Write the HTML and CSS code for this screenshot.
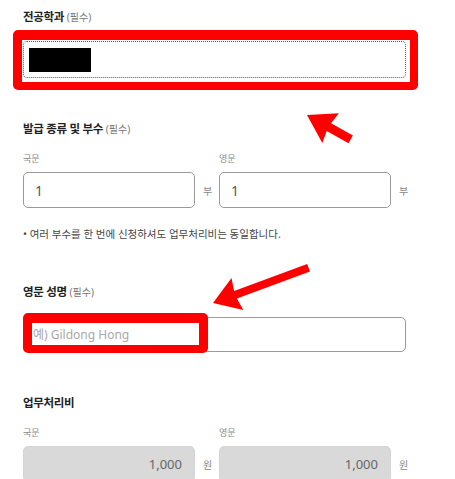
FILE: index.html
```html
<!DOCTYPE html>
<html lang="ko">
<head>
    <meta charset="UTF-8">
    <meta name="viewport" content="width=device-width, initial-scale=1.0">
    <title>증명서 발급 신청</title>
    <link rel="stylesheet" href="styles.css">
</head>
<body>
    <div class="form">
        <div class="section first">
            <div class="label">전공학과 <span class="req">(필수)</span></div>
            <div class="field field-major">
                <input class="text-input focused" type="text" value="">
                <div class="redact"></div>
                <div class="highlight hl-major"></div>
            </div>
        </div>

        <div class="section">
            <div class="label">발급 종류 및 부수 <span class="req">(필수)</span></div>
            <div class="pair">
                <div class="col">
                    <div class="sub-label">국문</div>
                    <div class="unit-row">
                        <input class="half-input" type="text" value="1">
                        <span class="unit">부</span>
                    </div>
                </div>
                <div class="col">
                    <div class="sub-label">영문</div>
                    <div class="unit-row">
                        <input class="half-input" type="text" value="1">
                        <span class="unit">부</span>
                    </div>
                </div>
            </div>
            <p class="note">• 여러 부수를 한 번에 신청하셔도 업무처리비는 동일합니다.</p>
        </div>

        <div class="section">
            <div class="label">영문 성명 <span class="req">(필수)</span></div>
            <div class="field field-name">
                <input class="text-input" type="text" placeholder="예) Gildong Hong">
                <div class="highlight hl-name"></div>
            </div>
        </div>

        <div class="section">
            <div class="label">업무처리비</div>
            <div class="pair">
                <div class="col">
                    <div class="sub-label">국문</div>
                    <div class="unit-row">
                        <input class="half-input readonly" type="text" value="1,000" readonly>
                        <span class="unit">원</span>
                    </div>
                </div>
                <div class="col">
                    <div class="sub-label">영문</div>
                    <div class="unit-row">
                        <input class="half-input readonly" type="text" value="1,000" readonly>
                        <span class="unit">원</span>
                    </div>
                </div>
            </div>
        </div>
    </div>

    <!-- annotation arrows -->
    <svg class="arrows" width="455" height="479" viewBox="0 0 455 479">
        <polygon fill="#ff0000" points="307,115 338.9,113.3 331,123.3 352.9,135.5 348.5,143.3 326.7,131.1 322.3,143.1"/>
        <polygon fill="#ff0000" points="213,303 231.5,278.1 234.1,290.9 307.2,263.9 310,271.4 236.9,298.4 243.3,309.9"/>
    </svg>
</body>
</html>
```

FILE: styles.css
```css
body {
    margin: 0;
    font-family: "Noto Sans", "Noto Sans CJK KR", sans-serif;
    background: #fff;
    color: #222;
    position: relative;
    width: 455px;
    height: 479px;
    overflow: hidden;
}
.form {
    padding: 0 23px;
}
.section {
    margin-top: 43px;
}
.section.first {
    margin-top: 9px;
}
.label {
    font-size: 11.5px;
    line-height: 16px;
    font-weight: 700;
    letter-spacing: -0.3px;
    color: #222;
}
.label .req {
    font-weight: 400;
    font-size: 10px;
    color: #777;
    letter-spacing: 0;
}
.field {
    position: relative;
    width: 383px;
    margin-top: 16px;
}
.field-name {
    margin-top: 17px;
}
.text-input {
    display: block;
    box-sizing: border-box;
    width: 383px;
    height: 35px;
    border: 1px solid #9a9a9a;
    border-radius: 5px;
    padding: 0 9px;
    font-family: inherit;
    font-size: 12px;
    color: #333;
    outline: none;
}
.text-input::placeholder {
    color: #a8a8a8;
}
.text-input.focused {
    height: 37px;
    border: 1px dotted #3f5f92;
    border-radius: 4px;
}
.redact {
    position: absolute;
    left: 6px;
    top: 7px;
    width: 62px;
    height: 24px;
    background: #000;
}
.highlight {
    position: absolute;
    border: 9px solid #ff0000;
    border-radius: 5px;
}
.hl-major {
    left: -10px;
    top: -11px;
    right: -12px;
    bottom: -12px;
    border-top-width: 10px;
    border-right-width: 8px;
    border-bottom-width: 8px;
}
.hl-name {
    left: 0;
    top: -4px;
    width: 167px;
    height: 22px;
    border-top-width: 10px;
    border-bottom-width: 8px;
}
.pair {
    display: grid;
    grid-template-columns: 196px 196px;
    margin-top: 16px;
}
.sub-label {
    font-size: 9px;
    line-height: 12px;
    color: #888;
}
.unit-row {
    display: flex;
    align-items: center;
    gap: 8px;
    margin-top: 7px;
}
.half-input {
    box-sizing: border-box;
    width: 172px;
    height: 36px;
    border: 1px solid #9a9a9a;
    border-radius: 5px;
    padding: 0 11px;
    font-family: inherit;
    font-size: 14px;
    color: #555;
    outline: none;
}
.half-input.readonly {
    background: #d9d9d9;
    border-color: #d4d4d4;
    text-align: right;
    font-size: 13px;
    color: #666;
    padding-right: 12px;
}
.unit {
    font-size: 10px;
    color: #888;
}
.note {
    margin: 19px 0 0;
    font-size: 10.5px;
    line-height: 14px;
    letter-spacing: 0;
    color: #444;
}
.arrows {
    position: absolute;
    left: 0;
    top: 0;
    pointer-events: none;
}
```
